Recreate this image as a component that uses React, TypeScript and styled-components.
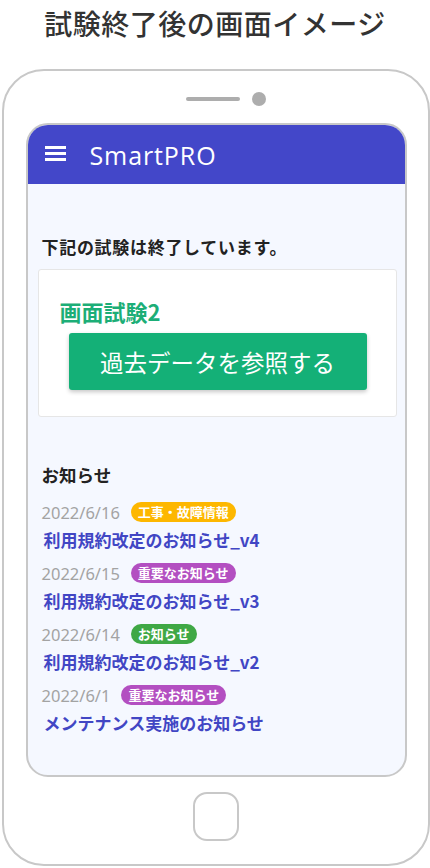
import styled, { createGlobalStyle } from 'styled-components'

const GlobalStyle = createGlobalStyle`
  html, body {
    margin: 0;
    padding: 0;
    background: #ffffff;
  }
  body {
    font-family: "Noto Sans CJK JP", "Noto Sans", sans-serif;
  }
`

const Page = styled.div`
  width: 430px;
  height: 868px;
  display: flex;
  flex-direction: column;
  align-items: center;
  overflow: hidden;
`

const PageTitle = styled.h1`
  margin: 0;
  height: 69px;
  line-height: 46px;
  font-size: 28px;
  font-weight: 500;
  color: #333333;
  letter-spacing: 0.5px;
`

const Phone = styled.div`
  box-sizing: border-box;
  width: 428px;
  height: 797px;
  margin-left: 2px;
  border: 2px solid #c8c8c8;
  border-radius: 42px;
  display: flex;
  flex-direction: column;
  align-items: center;
  padding-top: 21px;
`

const SpeakerRow = styled.div`
  display: flex;
  align-items: center;
  gap: 12px;
  height: 14px;
  margin-left: 20px;
`

const Speaker = styled.div`
  width: 54px;
  height: 4px;
  border-radius: 2px;
  background: #adadad;
`

const Camera = styled.div`
  width: 14px;
  height: 14px;
  border-radius: 50%;
  background: #adadad;
`

const Screen = styled.div`
  box-sizing: border-box;
  width: 381px;
  height: 654px;
  margin-top: 17px;
  border: 2px solid #c8c8c8;
  border-radius: 22px;
  background: #f5f8ff;
  overflow: hidden;
  display: flex;
  flex-direction: column;
`

const Header = styled.header`
  height: 59px;
  background: #4347c9;
  display: flex;
  align-items: center;
  padding-left: 17px;
  gap: 24px;
  flex-shrink: 0;
`

const Hamburger = styled.div`
  width: 21px;
  display: flex;
  flex-direction: column;
  gap: 3px;
  margin-top: -2px;

  span {
    display: block;
    height: 3px;
    background: #ffffff;
  }
`

const Brand = styled.div`
  font-family: "Open Sans", "Noto Sans", sans-serif;
  font-size: 25px;
  color: #ffffff;
  letter-spacing: 0.9px;
`

const Content = styled.main`
  padding: 0 8px 0 10px;
  display: flex;
  flex-direction: column;
`

const Notice = styled.p`
  margin: 50px 0 0 4px;
  line-height: 26px;
  font-size: 17px;
  font-weight: 700;
  color: #222222;
  letter-spacing: 0.7px;
`

const Card = styled.section`
  margin-top: 9px;
  background: #ffffff;
  border: 1px solid #e6e6e6;
  border-radius: 3px;
  padding: 28px 29px 26px 21px;
`

const ExamName = styled.h2`
  margin: 0;
  line-height: 26px;
  font-size: 22px;
  font-weight: 700;
  color: #1cae77;
`

const RefButton = styled.button`
  box-sizing: border-box;
  display: block;
  width: 298px;
  height: 57px;
  margin: 9px 0 0 9px;
  border: none;
  border-radius: 3px;
  background: #14b077;
  color: #ffffff;
  font-family: "Noto Sans CJK JP", sans-serif;
  font-size: 23.5px;
  font-weight: 400;
  box-shadow: 0 2px 4px rgba(0, 0, 0, 0.22);
`

const SectionTitle = styled.h3`
  margin: 45px 0 0 4px;
  line-height: 26px;
  font-size: 17.5px;
  font-weight: 700;
  color: #222222;
`

const NewsList = styled.ul`
  list-style: none;
  margin: 12px 0 0 4px;
  padding: 0;
`

const NewsItem = styled.li`
  margin-bottom: 8px;
`

const NewsMeta = styled.div`
  height: 24px;
  display: flex;
  align-items: center;
  gap: 11px;
`

const NewsDate = styled.span`
  font-family: "Noto Sans", "Noto Sans CJK JP", sans-serif;
  font-size: 16.5px;
  color: #a3a3a3;
`

const Badge = styled.span<{ $color: string }>`
  height: 20px;
  line-height: 20px;
  padding: 0 7px;
  border-radius: 10px;
  background: ${(p) => p.$color};
  color: #ffffff;
  font-size: 13px;
  font-weight: 700;
`

const NewsLink = styled.a`
  display: block;
  margin: 3px 0 0 2px;
  line-height: 26px;
  font-size: 17px;
  font-weight: 700;
  color: #4146c4;
  text-decoration: none;
`

const HomeButton = styled.div`
  box-sizing: border-box;
  width: 46px;
  height: 49px;
  margin-top: 15px;
  border: 2px solid #c8c8c8;
  border-radius: 14px;
`

const badgeColors: Record<string, string> = {
  '工事・故障情報': '#fdb700',
  '重要なお知らせ': '#b34fc1',
  'お知らせ': '#3fa845',
}

const news = [
  { date: '2022/6/16', tag: '工事・故障情報', title: '利用規約改定のお知らせ_v4' },
  { date: '2022/6/15', tag: '重要なお知らせ', title: '利用規約改定のお知らせ_v3' },
  { date: '2022/6/14', tag: 'お知らせ', title: '利用規約改定のお知らせ_v2' },
  { date: '2022/6/1', tag: '重要なお知らせ', title: 'メンテナンス実施のお知らせ' },
]

const App = () => (
  <>
    <GlobalStyle />
    <Page>
      <PageTitle>試験終了後の画面イメージ</PageTitle>
      <Phone>
        <SpeakerRow>
          <Speaker />
          <Camera />
        </SpeakerRow>
        <Screen>
          <Header>
            <Hamburger>
              <span />
              <span />
              <span />
            </Hamburger>
            <Brand>SmartPRO</Brand>
          </Header>
          <Content>
            <Notice>下記の試験は終了しています。</Notice>
            <Card>
              <ExamName>画面試験2</ExamName>
              <RefButton>過去データを参照する</RefButton>
            </Card>
            <SectionTitle>お知らせ</SectionTitle>
            <NewsList>
              {news.map((n) => (
                <NewsItem key={n.title + n.date}>
                  <NewsMeta>
                    <NewsDate>{n.date}</NewsDate>
                    <Badge $color={badgeColors[n.tag]}>{n.tag}</Badge>
                  </NewsMeta>
                  <NewsLink href="#">{n.title}</NewsLink>
                </NewsItem>
              ))}
            </NewsList>
          </Content>
        </Screen>
        <HomeButton />
      </Phone>
    </Page>
  </>
)

export default App
